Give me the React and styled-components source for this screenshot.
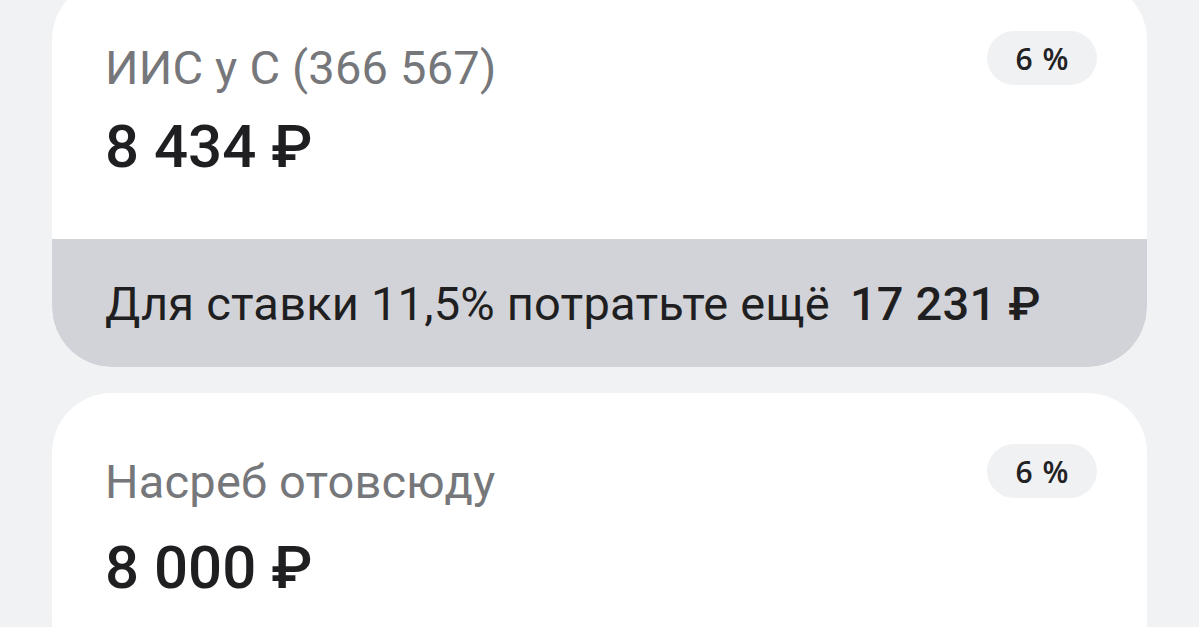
import React from "react";
import styled, { createGlobalStyle } from "styled-components";

const Global = createGlobalStyle`
  html, body {
    margin: 0;
    padding: 0;
    background: #f1f2f4;
    overflow: hidden;
  }
  body {
    font-family: Roboto, "Liberation Sans", sans-serif;
    -webkit-font-smoothing: antialiased;
  }
`;

const Page = styled.div`
  display: flex;
  flex-direction: column;
  gap: 26px;
  padding: 0 52px;
  margin-top: -20px;
  height: 700px;
`;

const Card = styled.section`
  background: #ffffff;
  border-radius: 60px;
  overflow: hidden;
  flex-shrink: 0;
  ${(p) => (p.$grow ? "flex: 1;" : "")}
`;

const CardBody = styled.div`
  display: flex;
  justify-content: space-between;
  align-items: flex-start;
  padding: 0 50px 0 53px;
  height: ${(p) => p.$height}px;
`;

const Info = styled.div`
  display: flex;
  flex-direction: column;
  padding-top: ${(p) => p.$top}px;
  gap: ${(p) => p.$gap}px;
`;

const Title = styled.div`
  font-size: 47px;
  line-height: 47px;
  color: #76777b;
  font-weight: 400;
  letter-spacing: 0.2px;
`;

const Amount = styled.div`
  font-size: 60px;
  line-height: 60px;
  color: #1f1f22;
  font-weight: 500;
`;

const Badge = styled.div`
  margin-top: 51px;
  width: 110px;
  height: 54px;
  border-radius: 27px;
  background: #f0f1f3;
  display: flex;
  align-items: center;
  justify-content: center;
  font-family: "Open Sans", "Noto Sans", sans-serif;
  font-size: 30px;
  font-weight: 600;
  color: #222224;
  word-spacing: 2px;
`;

const Hint = styled.div`
  background: #d2d3d8;
  height: 128px;
  display: flex;
  align-items: center;
  padding: 0 53px;
  font-size: 47px;
  letter-spacing: 0.2px;
  color: #1f1f22;
  font-weight: 400;
  border-radius: 0 0 60px 60px;
`;

const Strong = styled.span`
  font-weight: 500;
  margin-left: 20px;
`;

export default function App() {
  return (
    <>
      <Global />
      <Page>
        <Card>
          <CardBody $height={259}>
            <Info $top={64} $gap={26}>
              <Title>ИИС у С (366 567)</Title>
              <Amount>8 434 ₽</Amount>
            </Info>
            <Badge>6 %</Badge>
          </CardBody>
          <Hint>
            Для ставки 11,5% потратьте ещё<Strong>17 231 ₽</Strong>
          </Hint>
        </Card>
        <Card $grow>
          <CardBody $height={300}>
            <Info $top={65} $gap={33}>
              <Title>Насреб отовсюду</Title>
              <Amount>8 000 ₽</Amount>
            </Info>
            <Badge>6 %</Badge>
          </CardBody>
        </Card>
      </Page>
    </>
  );
}
